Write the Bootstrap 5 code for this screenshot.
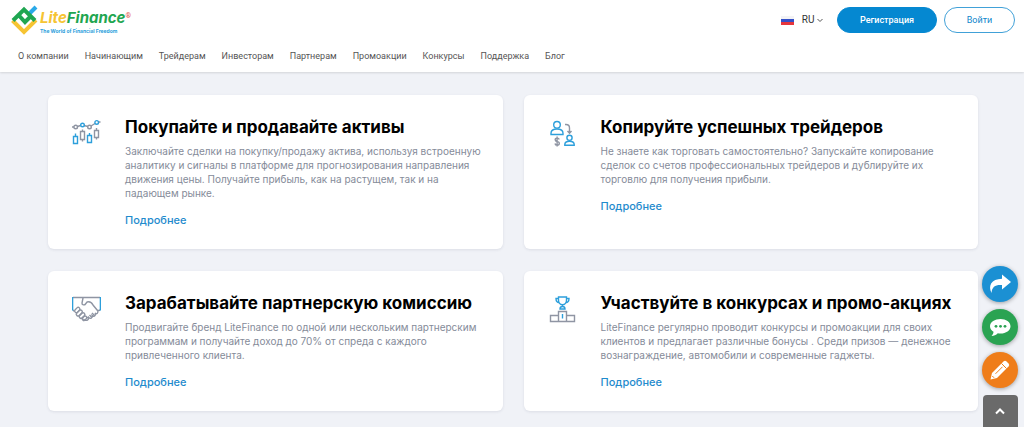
<!DOCTYPE html>
<html lang="ru">
<head>
<meta charset="utf-8">
<meta name="viewport" content="width=device-width, initial-scale=1">
<title>LiteFinance</title>
<link href="https://cdn.jsdelivr.net/npm/bootstrap@5.3.0/dist/css/bootstrap.min.css" rel="stylesheet">
<style>
  body { background: #f0f2f7; font-family: Inter, sans-serif; }
  a { text-decoration: none; }
  .site-header { font-family: Roboto, sans-serif; height: 72px; box-shadow: 0 1px 2px rgba(0,0,0,.12); }
  .top-row { height: 40px; padding: 0 9px 0 10px; }
  .brand { gap: 0; }
  .brand-name { font: italic 700 15px/18px Inter, sans-serif; color: #1fa651; padding-top: 3px; }
  .brand-name i { color: #f6c433; }
  .brand-reg { font: 700 7px/8px Roboto, sans-serif; color: #e2574f; padding-top: 6px; }
  .brand-tag { font: 700 5px/8px Inter, sans-serif; color: #2aa0dc; }
  .lang-btn { font-size: 10px; line-height: 14px; color: #333; border: 0; background: none; padding: 0; gap: 8px; margin-right: 14px; }
  .pill { --bs-btn-border-radius: 14px; font-size: 9px; line-height: 14px; height: 26px; padding: 0; --bs-btn-color: #0e86cb; --bs-btn-border-color: #41a1d8; --bs-btn-hover-bg: #0a86cf; --bs-btn-hover-color: #fff; }
  .pill-main { width: 100px; --bs-btn-bg: #0588d1; --bs-btn-color: #fff; --bs-btn-border-color: #0588d1; font-weight: 500; margin-right: 7px; }
  .pill-line { width: 71px; }
  .main-nav { gap: 16px; padding: 9px 18px 0; }
  .main-nav .nav-link { padding: 0; font-size: 9px; line-height: 14px; color: #555; }
  .offers { padding: 23px 46px 15px 48px; --bs-gutter-x: 21px; }
  .offer-grid { --bs-gutter-x: 21px; --bs-gutter-y: 22px; }
  .offer { border: 0; border-radius: 6px; padding: 20px 16px 22px 24px; gap: 24px; box-shadow: 0 1px 3px rgba(40,50,80,.1); }
  .offer-icon { width: 29px; height: 29px; margin-top: 4px; fill: none; stroke: #8f95a3; stroke-width: 1.4; }
  .offer-icon .hl { stroke: #2d9fdb; }
  .offer h2 { font-size: 17px; line-height: 24px; font-weight: 700; color: #000; margin: 0 0 5px; }
  .offer p { font-size: 10px; line-height: 14px; color: #858b99; margin: 0 0 13px; }
  .offer-link { font-size: 11px; line-height: 14px; font-weight: 500; color: #1f8bcd; display: block; }
  .side-tools { right: 6px; bottom: 0; width: 36px; }
  .round-btn { width: 36px; height: 36px; border: 0; padding: 0; margin-bottom: 7px; box-shadow: 0 1px 4px rgba(0,0,0,.35); }
  .round-btn svg { fill: #fff; }
  .up-btn { width: 35px; height: 32px; border: 0; padding: 0; background: #6a6a6a; border-radius: 4px 4px 0 0; }
</style>
</head>
<body>
<header class="site-header bg-white">
  <div class="top-row d-flex align-items-center">
    <a class="brand d-flex align-items-center me-auto" href="#">
      <svg width="30" height="30" viewBox="0 0 30 30" fill="none" stroke-width="4" aria-hidden="true">
        <path d="M2.500 15.500 14 27 26 15" stroke="#f6c433"/>
        <path d="M26 2 18 10" stroke="#2aa9e8"/>
        <path d="M3 15.500 14 4.500 25 15.500M8.500 10 15 17 21 11" stroke="#1fa651"/>
      </svg>
      <span class="d-flex flex-column">
        <span class="d-flex"><span class="brand-name"><i>Lite</i>Finance</span><span class="brand-reg">®</span></span>
        <span class="brand-tag">The World of Financial Freedom</span>
      </span>
    </a>
    <button class="lang-btn d-flex align-items-center" type="button">
      <svg width="13" height="9" aria-hidden="true"><rect width="13" height="9" fill="#f3f3f5"/><path fill="#3450c8" d="M0 3h13v3H0z"/><path fill="#e5353c" d="M0 6h13v3H0z"/></svg>
      <span>RU <svg width="6" height="5" viewBox="0 0 6 5" fill="none" stroke="#555" aria-hidden="true"><path d="M.5 1 3 3.500 5.500 1"/></svg></span>
    </button>
    <button class="btn pill pill-main" type="button">Регистрация</button>
    <button class="btn pill pill-line" type="button">Войти</button>
  </div>
  <nav class="nav main-nav">
    <a class="nav-link" href="#">О компании</a>
    <a class="nav-link" href="#">Начинающим</a>
    <a class="nav-link" href="#">Трейдерам</a>
    <a class="nav-link" href="#">Инвесторам</a>
    <a class="nav-link" href="#">Партнерам</a>
    <a class="nav-link" href="#">Промоакции</a>
    <a class="nav-link" href="#">Конкурсы</a>
    <a class="nav-link" href="#">Поддержка</a>
    <a class="nav-link" href="#">Блог</a>
  </nav>
</header>

<main class="container-fluid offers">
  <div class="row row-cols-1 row-cols-md-2 offer-grid">
    <div class="col">
      <article class="card offer flex-row h-100">
        <svg class="offer-icon flex-shrink-0" viewBox="0 0 29 29" aria-hidden="true">
          <path d="M0 8h2M5.500 7.500 8.500 6.500M12 6.500 16 7.500M19 7 23 4.500M26.500 3H28.500"/>
          <circle cx="3.700" cy="8" r="1.800"/><circle cx="17.500" cy="8" r="1.800"/>
          <path d="M8.500 12.500h4v8h-4zM10.500 10.500v2M10.500 20.500v2M22.500 11.500h4v7h-4zM24.500 9v2.500M24.500 18.500v2"/>
          <g class="hl"><circle cx="10.500" cy="6" r="1.800"/><circle cx="24.700" cy="3.400" r="1.800"/><path d="M1.500 17.500h4v7h-4zM3.500 14.500v3M15.500 16.500h4v7h-4zM17.500 14v2.500"/></g>
        </svg>
        <div>
          <h2>Покупайте и продавайте активы</h2>
          <p>Заключайте сделки на покупку/продажу актива, используя встроенную аналитику и сигналы в платформе для прогнозирования направления движения цены. Получайте прибыль, как на растущем, так и на падающем рынке.</p>
          <a class="offer-link" href="#">Подробнее</a>
        </div>
      </article>
    </div>
    <div class="col">
      <article class="card offer flex-row h-100">
        <svg class="offer-icon flex-shrink-0" viewBox="0 0 29 29" aria-hidden="true">
          <g class="hl"><circle cx="9" cy="5.800" r="3.300"/><path d="M3 15.500v-1.200c0-3 2.500-4.300 6-4.300s6 1.300 6 4.300v1.200z"/><circle cx="21.500" cy="18.800" r="2.600"/><path d="M16.800 26.300v-.8c0-2.300 2-3.300 4.700-3.300s4.700 1 4.700 3.300v.8z"/></g>
          <path d="M17 5.500h1c2.500 0 3.500 1 3.500 3.500v5M19.500 12l2 2.200 2-2.200M11.200 20.500c-.2-1-1-1.400-2-1.400-2.700 0-2.700 3.300 0 3.500 2.800.2 2.800 3.500 0 3.500-1.200 0-2-.5-2.200-1.600M9.100 17.500v10"/>
        </svg>
        <div>
          <h2>Копируйте успешных трейдеров</h2>
          <p>Не знаете как торговать самостоятельно? Запускайте копирование сделок со счетов профессиональных трейдеров и дублируйте их торговлю для получения прибыли.</p>
          <a class="offer-link" href="#">Подробнее</a>
        </div>
      </article>
    </div>
    <div class="col">
      <article class="card offer flex-row h-100">
        <svg class="offer-icon flex-shrink-0" viewBox="0 0 29 29" aria-hidden="true">
          <path d="M1 2.500h27M28 15l-2.500 1M1 15l1.500 1.500M11 3 10 8c-.2 2 2.500 2.500 3.500 1l1.500-2c3-1 5 1 6 3l4.500 5.500c1.500 2.500-1 4-2.500 2.500 1.500 2-1 4.200-2.800 2.500.5 2.500-1.800 3.800-3.500 2 0 2.500-2 3.500-4 2.500l-1.500-1"/>
          <path d="M20 18l3 3M17.500 20l2.700 2.800M15 22l1.700 1.500"/>
          <rect x="2.200" y="13.500" width="6" height="3.400" rx="1.700" transform="rotate(-45 5 15)"/>
          <rect x="3.800" y="16.300" width="7" height="3.400" rx="1.700" transform="rotate(-45 7.300 18)"/>
          <rect x="6.800" y="18.900" width="6.500" height="3.400" rx="1.700" transform="rotate(-45 10 20.600)"/>
          <rect x="10" y="21.700" width="5" height="3.200" rx="1.600" transform="rotate(-45 12.500 23.300)"/>
          <path class="hl" d="M.6 2v13.500M28.400 2v13.500"/>
        </svg>
        <div>
          <h2>Зарабатывайте партнерскую комиссию</h2>
          <p>Продвигайте бренд LiteFinance по одной или нескольким партнерским программам и получайте доход до 70% от спреда с каждого привлеченного клиента.</p>
          <a class="offer-link" href="#">Подробнее</a>
        </div>
      </article>
    </div>
    <div class="col">
      <article class="card offer flex-row h-100">
        <svg class="offer-icon flex-shrink-0" viewBox="0 0 29 29" aria-hidden="true">
          <path d="M10.500 16.500h8v10h-8zM2.500 20.500h8v6h-8zM18.500 20.500h8v6h-8z"/>
          <g class="hl"><path d="M10.500 2h8v3c0 3-2 4.800-4 4.800s-4-1.800-4-4.800zM10.500 3.500H8c0 3 1 4 3.300 4.200M18.500 3.500H21c0 3-1 4-3.300 4.200M14.500 10v1.500M12 14c0-1.600 1-2.500 2.500-2.500S17 12.400 17 14zM14.500 19v4.500"/></g>
        </svg>
        <div>
          <h2>Участвуйте в конкурсах и промо-акциях</h2>
          <p>LiteFinance регулярно проводит конкурсы и промоакции для своих клиентов и предлагает различные бонусы . Среди призов — денежное вознаграждение, автомобили и современные гаджеты.</p>
          <a class="offer-link" href="#">Подробнее</a>
        </div>
      </article>
    </div>
  </div>
</main>

<aside class="side-tools position-fixed d-flex flex-column align-items-center">
  <button class="round-btn rounded-circle d-flex align-items-center justify-content-center" type="button" aria-label="Поделиться" style="background:#1b90d3">
    <svg width="24" height="22" viewBox="0 0 24 22"><path d="M14 1.500 23 9l-9 7.500V12C7.500 11.500 4 13.500 3.500 20 0 13 3 6 14 5.800z"/></svg>
  </button>
  <button class="round-btn rounded-circle d-flex align-items-center justify-content-center" type="button" aria-label="Чат" style="background:#2aa352">
    <svg width="24" height="22" viewBox="0 0 24 22"><path d="M12.500 3C18 3 22.500 6 22.500 10.200S18 17.500 12.500 17.500c-1 0-1.800-.1-2.700-.3C8 19 6 20 3.500 20c1.200-1.200 2-2.500 2-4.200C3.500 14.500 2 12.500 2 10.200 2 6 7 3 12.500 3z"/><g fill="#2aa352"><circle cx="8" cy="10.300" r="1.400"/><circle cx="12.500" cy="10.300" r="1.400"/><circle cx="17" cy="10.300" r="1.400"/></g></svg>
  </button>
  <button class="round-btn rounded-circle d-flex align-items-center justify-content-center" type="button" aria-label="Написать" style="background:#ef7d1a">
    <svg width="22" height="22" viewBox="0 0 22 22"><path d="M14.500 2.500q1.500-1.500 3 0l2 2q1.500 1.500 0 3L8 19l-6.500 1.500L3 14z"/><path d="m12.500 4.500 5 5M6.500 14.800l7-7M3.300 17l1.800 1.800" stroke="#ef7d1a"/></svg>
  </button>
  <button class="up-btn d-flex align-items-center justify-content-center" type="button" aria-label="Наверх">
    <svg width="10" height="8" viewBox="0 0 10 8" fill="none" stroke="#fff" stroke-width="2"><path d="M1 6.500 5 2.500 9 6.500"/></svg>
  </button>
</aside>
<script src="https://cdn.jsdelivr.net/npm/bootstrap@5.3.0/dist/js/bootstrap.bundle.min.js"></script>
</body>
</html>
